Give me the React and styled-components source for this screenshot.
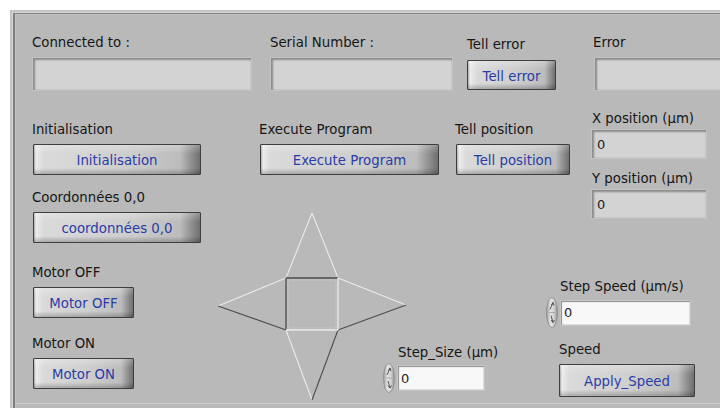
import React from "react";
import styled, { createGlobalStyle } from "styled-components";

const Global = createGlobalStyle`
  html, body { margin: 0; padding: 0; background: #ffffff; overflow: hidden; }
  body { width: 720px; height: 408px; font-family: "DejaVu Sans", Verdana, sans-serif; font-size: 13.3px; color: #161616; }
  * { box-sizing: border-box; }
`;

const Panel = styled.div`
  margin: 10px 0 0 10px;
  width: 710px;
  height: 398px;
  background: #b9b9b9;
  overflow: hidden;
  display: flex;
  flex-direction: column;
  box-shadow: inset 2px 2px 0 #c4c4c4, inset 3px 3px 0 #d8d8d8, inset 5px 4px 0 #7f7f7f,
    inset 6px 5px 0 #c4c4c4;
`;

const Content = styled.div`
  margin: 5px 0 0 6px;
  height: 389px;
  border-bottom: 1px solid #cdcdcd;
  padding: 20px 0 0 16px;
  display: flex;
  flex-direction: column;
`;

const TopRow = styled.div`
  display: flex;
  align-items: flex-end;
`;

const Field = styled.div`
  display: flex;
  flex-direction: column;
  align-items: flex-start;
  margin-left: ${(p) => p.$ml || 0}px;
  margin-top: ${(p) => p.$mt || 0}px;
`;

const Label = styled.div`
  height: 16px;
  line-height: 16px;
  white-space: nowrap;
  margin-left: ${(p) => p.$ml || 0}px;
  margin-bottom: ${(p) => (p.$gap === undefined ? 6 : p.$gap)}px;
`;

const Indicator = styled.div`
  width: ${(p) => p.$w}px;
  height: ${(p) => p.$h}px;
  margin-left: ${(p) => p.$ml || 0}px;
  background: #d3d3d3;
  padding: 0 0 0 5px;
  display: flex;
  align-items: center;
  font-size: 13px;
  color: #1c1c1c;
  box-shadow: inset 3px 3px 2px -1px #8b8b8b, inset -1px -1px 0 #c6c6c6,
    0 0 0 1px #c2c2c2;
`;

const Button = styled.button`
  width: ${(p) => p.$w}px;
  height: ${(p) => p.$h || 31}px;
  margin: 0 0 0 ${(p) => (p.$ml === undefined ? 1 : p.$ml)}px;
  padding: 2px 0 0 0;
  border: 1px solid #3e3e3e;
  border-radius: 1px;
  background:
    linear-gradient(to bottom, rgba(255, 255, 255, 0.25) 0, rgba(255, 255, 255, 0) 30%,
      rgba(0, 0, 0, 0) 80%, rgba(0, 0, 0, 0.22) 100%),
    linear-gradient(to right, #a9a9a9 0, #ececec 2px, #dadada 9px, #cecece 55%,
      #bcbcbc 88%, #6f6f6f 100%);
  color: #2a3ca6;
  font-family: inherit;
  font-size: 13.3px;
  white-space: nowrap;
  cursor: default;
`;

const Main = styled.div`
  display: flex;
  margin-top: 21px;
`;

const LeftColumn = styled.div`
  width: 169px;
  padding-top: 11px;
  display: flex;
  flex-direction: column;
`;

const RightArea = styled.div`
  margin-left: 15px;
  display: flex;
  flex-direction: column;
`;

const TopBand = styled.div`
  display: flex;
  align-items: flex-start;
`;

const XYStack = styled.div`
  margin-left: 22px;
  display: flex;
  flex-direction: column;
`;

const BottomBand = styled.div`
  margin-top: -7px;
  height: 191px;
  display: grid;
  grid-template-columns: 167px 163px auto;
  grid-template-rows: 1fr;
`;

const StarSvg = styled.svg`
  grid-column: 1 / 3;
  grid-row: 1;
  align-self: start;
  justify-self: start;
`;

const StepSizeGroup = styled(Field)`
  grid-column: 2;
  grid-row: 1;
  align-self: end;
  margin-bottom: 9px;
`;

const SpeedStack = styled.div`
  grid-column: 3;
  grid-row: 1;
  align-self: end;
  margin-bottom: 5px;
  display: flex;
  flex-direction: column;
`;

const ControlRow = styled.div`
  display: flex;
  align-items: center;
  height: ${(p) => p.$h}px;
`;

const NumBox = styled.div`
  width: ${(p) => p.$w}px;
  height: 24px;
  margin-left: 3px;
  background: #f8f8f8;
  padding-left: 3px;
  display: flex;
  align-items: center;
  font-size: 13px;
  color: #1c1c1c;
  box-shadow: inset 2px 2px 1px -1px #8d8d8d, inset -1px -1px 0 #dddddd,
    0 0 0 1px #c4c4c4;
`;

const Spinner = ({ h }) => (
  <svg width="12" height={h} viewBox={`0 0 12 ${h}`}>
    <defs>
      <linearGradient id={`sg${h}`} x1="0" x2="1" y1="0" y2="0">
        <stop offset="0" stopColor="#9a9a9a" />
        <stop offset="0.35" stopColor="#e4e4e4" />
        <stop offset="0.7" stopColor="#cfcfcf" />
        <stop offset="1" stopColor="#8c8c8c" />
      </linearGradient>
    </defs>
    <ellipse cx="6" cy={h / 2} rx="5.5" ry={h / 2 - 0.5} fill={`url(#sg${h})`} stroke="#8a8a8a" strokeWidth="0.8" />
    <path d={`M4 ${h / 2 - 3} L7 ${h / 2 - 10} M7 ${h / 2 - 10} L5.5 ${h / 2 - 7.5} M7 ${h / 2 - 10} L8 ${h / 2 - 7}`} stroke="#555" strokeWidth="1" fill="none" />
    <path d={`M5 ${h / 2 + 3} L7 ${h / 2 + 10} M7 ${h / 2 + 10} L5 ${h / 2 + 7.5} M7 ${h / 2 + 10} L8.5 ${h / 2 + 7.5}`} stroke="#555" strokeWidth="1" fill="none" />
    <line x1="3" y1={h / 2} x2="9" y2={h / 2} stroke="#a0a0a0" strokeWidth="0.8" />
  </svg>
);

const Star = () => {
  const light = "#ebebeb";
  const dark = "#4c4c4c";
  const T = [96, 2];
  const L = [2, 95];
  const R = [190, 94];
  const B = [96, 189];
  const s = { x1: 70, y1: 67, x2: 122, y2: 119 };
  const ln = (a, b, c, w = 1.1) => (
    <line x1={a[0]} y1={a[1]} x2={b[0]} y2={b[1]} stroke={c} strokeWidth={w} />
  );
  const tl = [s.x1, s.y1];
  const tr = [s.x2, s.y1];
  const bl = [s.x1, s.y2];
  const br = [s.x2, s.y2];
  return (
    <StarSvg width="192" height="191" viewBox="0 0 192 191">
      {ln(T, tl, light)}
      {ln(T, tr, light)}
      {ln(L, tl, light)}
      {ln(L, bl, dark)}
      {ln(R, tr, light)}
      {ln(R, br, dark)}
      {ln(B, bl, light)}
      {ln(B, br, dark)}
      <rect x={s.x1 + 2} y={s.y1 + 2} width={s.x2 - s.x1 - 4} height={s.y2 - s.y1 - 4} fill="none" stroke="#c6c6c6" strokeWidth="0.8" />
      {ln(tl, tr, dark, 1.3)}
      {ln(tl, bl, dark, 1.3)}
      {ln(tr, br, light, 1.3)}
      {ln(bl, br, light, 1.3)}
    </StarSvg>
  );
};

export default function App() {
  return (
    <>
      <Global />
      <Panel>
        <Content>
          <TopRow>
            <Field>
              <Label $gap={7}>Connected to :</Label>
              <Indicator $w={218} $h={32} $ml={1} />
            </Field>
            <Field $ml={19}>
              <Label $gap={7}>Serial Number :</Label>
              <Indicator $w={181} $h={32} $ml={1} />
            </Field>
            <Field $ml={15}>
              <Label $gap={7}>Tell error</Label>
              <Button $w={89} $h={30} $ml={0}>Tell error</Button>
            </Field>
            <Field $ml={37}>
              <Label $gap={7}>Error</Label>
              <Indicator $w={140} $h={32} $ml={2} />
            </Field>
          </TopRow>
          <Main>
            <LeftColumn>
              <Field>
                <Label>Initialisation</Label>
                <Button $w={168}>Initialisation</Button>
              </Field>
              <Field $mt={15}>
                <Label>Coordonnées 0,0</Label>
                <Button $w={168}>coordonnées 0,0</Button>
              </Field>
              <Field $mt={22}>
                <Label>Motor OFF</Label>
                <Button $w={101}>Motor OFF</Button>
              </Field>
              <Field $mt={18}>
                <Label>Motor ON</Label>
                <Button $w={101}>Motor ON</Button>
              </Field>
            </LeftColumn>
            <RightArea>
              <TopBand>
                <Field $ml={43} $mt={11}>
                  <Label>Execute Program</Label>
                  <Button $w={179}>Execute Program</Button>
                </Field>
                <Field $ml={16} $mt={11}>
                  <Label>Tell position</Label>
                  <Button $w={114}>Tell position</Button>
                </Field>
                <XYStack>
                  <Field>
                    <Label $gap={3}>X position (µm)</Label>
                    <Indicator $w={114} $h={28}>0</Indicator>
                  </Field>
                  <Field $mt={13}>
                    <Label $gap={3}>Y position (µm)</Label>
                    <Indicator $w={114} $h={28}>0</Indicator>
                  </Field>
                </XYStack>
              </TopBand>
              <BottomBand>
                <Star />
                <StepSizeGroup>
                  <Label $ml={15} $gap={2}>Step_Size (µm)</Label>
                  <ControlRow $h={30}>
                    <Spinner h={30} />
                    <NumBox $w={86}>0</NumBox>
                  </ControlRow>
                </StepSizeGroup>
                <SpeedStack>
                  <Field>
                    <Label $ml={14} $gap={2}>Step Speed (µm/s)</Label>
                    <ControlRow $h={31}>
                      <Spinner h={31} />
                      <NumBox $w={129}>0</NumBox>
                    </ControlRow>
                  </Field>
                  <Field $mt={14} $ml={13}>
                    <Label>Speed</Label>
                    <Button $w={136} $h={33} $ml={0}>Apply_Speed</Button>
                  </Field>
                </SpeedStack>
              </BottomBand>
            </RightArea>
          </Main>
        </Content>
      </Panel>
    </>
  );
}
